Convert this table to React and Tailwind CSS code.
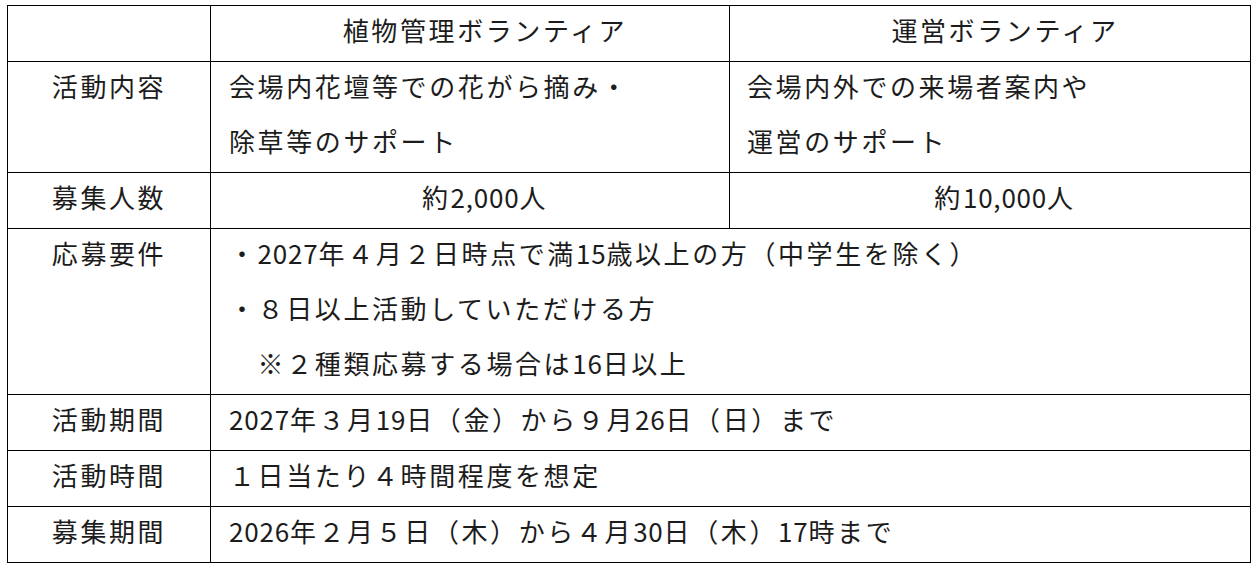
const rows = [
  {
    label: '活動内容',
    cells: [
      ['会場内花壇等での花がら摘み・', '除草等のサポート'],
      ['会場内外での来場者案内や', '運営のサポート'],
    ],
  },
  {
    label: '募集人数',
    cells: [['約2,000人'], ['約10,000人']],
    center: true,
  },
  {
    label: '応募要件',
    span: [
      '・2027年４月２日時点で満15歳以上の方（中学生を除く）',
      '・８日以上活動していただける方',
      '　※２種類応募する場合は16日以上',
    ],
  },
  { label: '活動期間', span: ['2027年３月19日（金）から９月26日（日）まで'] },
  { label: '活動時間', span: ['１日当たり４時間程度を想定'] },
  { label: '募集期間', span: ['2026年２月５日（木）から４月30日（木）17時まで'] },
]

// half-width digits are set tighter than the kana/kanji around them
function Text({ s }) {
  return s.split(/([0-9][0-9,]*)/).map((part, i) =>
    /^[0-9]/.test(part) ? (
      <span key={i} className="tracking-[0.8px]">
        {part}
      </span>
    ) : (
      part
    )
  )
}

// text sits a little high in the source doc, pull it up without changing row height
function Lines({ lines }) {
  return (
    <div className="-mt-[4px]">
      {lines.map((l, i) => (
        <div key={i} className="whitespace-pre">
          <Text s={l} />
        </div>
      ))}
    </div>
  )
}

const cell = 'border border-black p-0 pb-[4px] align-top'
// centred cells in the two volunteer columns sit a bit right of true centre
const centered = 'text-center pl-[30px]'

export default function App() {
  return (
    <div
      className="min-h-screen bg-white pl-[7px] pt-[5px] text-[#1c1c1c]"
      style={{ fontFamily: '"Noto Sans CJK JP", "Noto Sans", sans-serif' }}
    >
      <table className="w-[1243px] table-fixed border-collapse text-[26px] leading-[55px] tracking-[2.6px]">
        <colgroup>
          <col className="w-[203px]" />
          <col className="w-[519px]" />
          <col className="w-[521px]" />
        </colgroup>
        <tbody>
          <tr>
            <td className={cell}></td>
            <td className={`${cell} ${centered}`}>
              <Lines lines={['植物管理ボランティア']} />
            </td>
            <td className={`${cell} ${centered}`}>
              <Lines lines={['運営ボランティア']} />
            </td>
          </tr>
          {rows.map((r) => (
            <tr key={r.label}>
              <td className={`${cell} text-center`}>
                <Lines lines={[r.label]} />
              </td>
              {r.span ? (
                <td colSpan={2} className={`${cell} pl-[18px]`}>
                  <Lines lines={r.span} />
                </td>
              ) : (
                r.cells.map((c, i) => (
                  <td
                    key={i}
                    className={`${cell} ${r.center ? centered : i === 0 ? 'pl-[18px]' : 'pl-[17px]'}`}
                  >
                    <Lines lines={c} />
                  </td>
                ))
              )}
            </tr>
          ))}
        </tbody>
      </table>
    </div>
  )
}
